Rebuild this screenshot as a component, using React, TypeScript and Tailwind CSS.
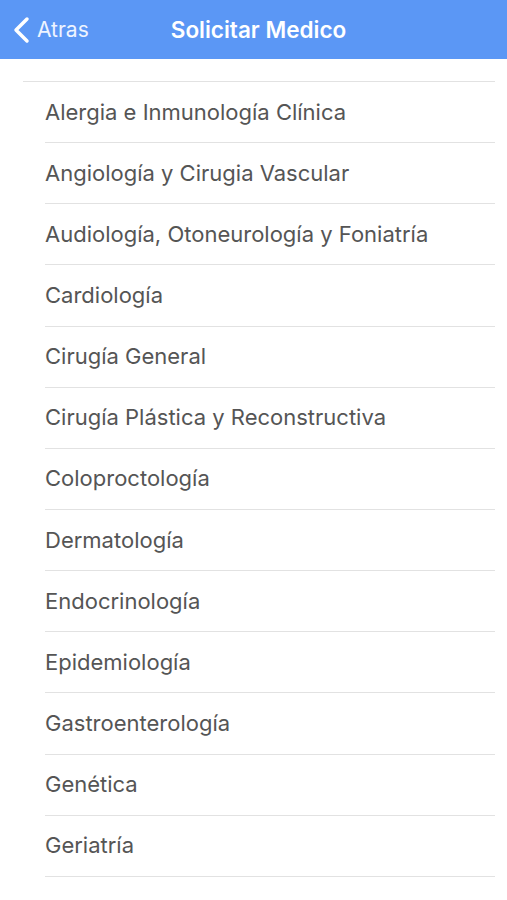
const especialidades = [
  "Alergia e Inmunología Clínica",
  "Angiología y Cirugia Vascular",
  "Audiología, Otoneurología y Foniatría",
  "Cardiología",
  "Cirugía General",
  "Cirugía Plástica y Reconstructiva",
  "Coloproctología",
  "Dermatología",
  "Endocrinología",
  "Epidemiología",
  "Gastroenterología",
  "Genética",
  "Geriatría",
];

export default function App() {
  return (
    <div className="w-[507px] h-[900px] bg-white overflow-hidden font-['Inter',sans-serif]">
      <header className="h-[59px] bg-[#5b97f5] flex items-center relative">
        <button className="flex items-center pl-[12px] text-white">
          <svg width="19" height="28" viewBox="0 0 19 28" fill="none">
            <path d="M15 3 L4 14 L15 25" stroke="white" strokeWidth="3.5" strokeLinecap="round" strokeLinejoin="round" />
          </svg>
          <span className="ml-[6px] text-[21px] text-[#eef4ff]">Atras</span>
        </button>
        <h1 className="absolute left-0 right-0 text-center pl-[10px] text-[22.5px] font-semibold text-white pointer-events-none">
          Solicitar Medico
        </h1>
      </header>
      <div className="h-[22px]" />
      <div className="ml-[23px] mr-[12px] border-b border-[#e2e2e2]" />
      <ul className="ml-[45px] mr-[12px]">
        {especialidades.map((e) => (
          <li key={e} className="h-[61.15px] flex items-center border-b border-[#e2e2e2] text-[22px] text-[#555555]">
            {e}
          </li>
        ))}
      </ul>
    </div>
  );
}
